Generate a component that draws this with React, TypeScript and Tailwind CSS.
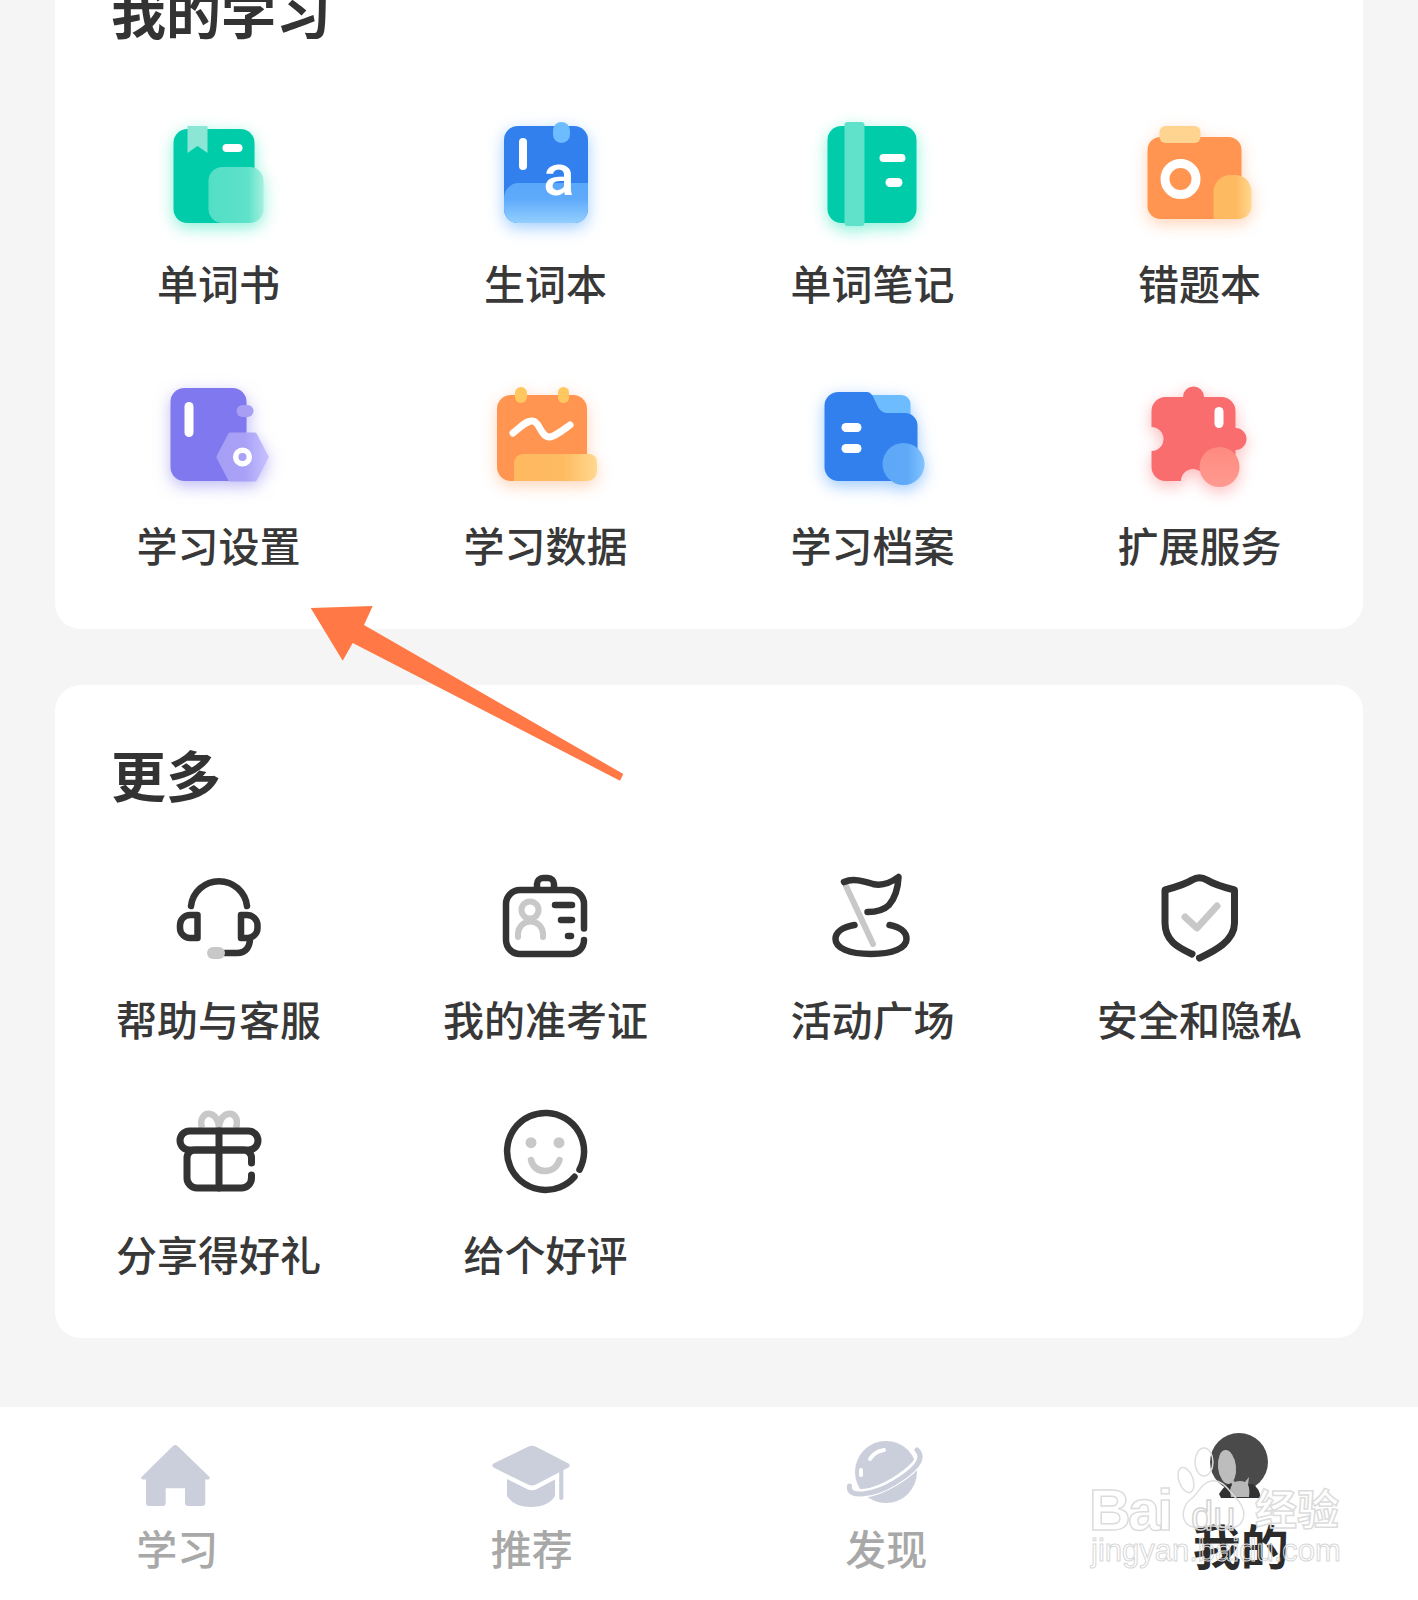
import type { ReactNode } from "react"

const INK = "#333333"
const GREY = "#c8c8c8"

function Gradients() {
  return (
    <svg width="0" height="0" className="absolute">
      <defs>
        <linearGradient id="mint" x1="0" y1="0" x2="1" y2="0">
          <stop offset="0" stopColor="#52dfc6" />
          <stop offset="0.72" stopColor="#5fe1ca" />
          <stop offset="1" stopColor="#a5f0dd" />
        </linearGradient>
        <linearGradient id="sky" x1="0" y1="0" x2="0" y2="1">
          <stop offset="0" stopColor="#5aa8fb" />
          <stop offset="0.4" stopColor="#5eaafb" />
          <stop offset="1" stopColor="#93cffe" />
        </linearGradient>
        <linearGradient id="amber" x1="0" y1="0" x2="1" y2="0">
          <stop offset="0" stopColor="#ffba60" />
          <stop offset="0.6" stopColor="#ffbb62" />
          <stop offset="1" stopColor="#ffd890" />
        </linearGradient>
        <linearGradient id="lilac" x1="0" y1="0" x2="1" y2="0">
          <stop offset="0" stopColor="#a79ff5" />
          <stop offset="0.55" stopColor="#a9a1f6" />
          <stop offset="1" stopColor="#c4beff" />
        </linearGradient>
        <linearGradient id="ball" x1="0" y1="0" x2="1" y2="0">
          <stop offset="0" stopColor="#5ea8f8" />
          <stop offset="0.6" stopColor="#60a9f9" />
          <stop offset="1" stopColor="#82c4ff" />
        </linearGradient>
        <linearGradient id="coral" x1="0" y1="0" x2="0" y2="1">
          <stop offset="0" stopColor="#fe8a80" />
          <stop offset="1" stopColor="#ff9a90" />
        </linearGradient>
      </defs>
    </svg>
  )
}

function Box({ children, shadow = "", dx = 0 }: { children: ReactNode; shadow?: string; dx?: number }) {
  return (
    <svg width="120" height="120" viewBox={`${dx} 0 120 120`} fill="none" className={shadow}>
      {children}
    </svg>
  )
}

const WordBook = () => (
  <Box dx={1} shadow="drop-shadow-[0_5px_8px_rgba(0,224,170,0.45)]">
    <rect x="15.5" y="15" width="81" height="94" rx="14" fill="#00ccaa" />
    <path d="M29.5 12H49.5V39L39.5 32L29.5 39Z" fill="#8be6d5" />
    <rect x="64.5" y="30" width="20" height="8" rx="4" fill="#fff" />
    <rect x="50.5" y="53" width="55" height="56" rx="14" fill="url(#mint)" />
  </Box>
)

const NewWords = () => (
  <Box dx={2} shadow="drop-shadow-[0_5px_8px_rgba(70,160,255,0.5)]">
    <rect x="20" y="12" width="84" height="97" rx="14" fill="#3280ee" />
    <path d="M20 84A15 15 0 0 1 35 69H104V95A14 14 0 0 1 90 109H34A14 14 0 0 1 20 95Z" fill="url(#sky)" />
    <rect x="69" y="8" width="17" height="21" rx="8.5" fill="#6cbcff" />
    <rect x="35" y="24" width="8" height="32" rx="4" fill="#fff" />
    <text x="75" y="81" textAnchor="middle" fill="#fff" fontSize="58" fontWeight="500" className="font-['Roboto',sans-serif]">
      a
    </text>
  </Box>
)

const WordNotes = () => (
  <Box dx={2} shadow="drop-shadow-[0_5px_8px_rgba(0,224,170,0.45)]">
    <rect x="16.5" y="12" width="89" height="97" rx="14" fill="#00ccaa" />
    <rect x="33.5" y="8" width="20" height="104" rx="3" fill="#5fe1ca" />
    <rect x="68.5" y="40" width="26" height="8" rx="4" fill="#fff" />
    <rect x="74.5" y="64" width="17" height="9" rx="4.5" fill="#fff" />
  </Box>
)

const Mistakes = () => (
  <Box dx={3} shadow="drop-shadow-[0_5px_8px_rgba(255,150,80,0.4)]">
    <rect x="10.5" y="23" width="94" height="82" rx="13" fill="#ff9550" />
    <rect x="22.5" y="12" width="41" height="17" rx="6" fill="#ffd390" />
    <circle cx="43.5" cy="65" r="15.5" stroke="#fff" strokeWidth="9" />
    <path d="M76.5 105V78A17 17 0 0 1 93.5 61H98A16.500 16.500 0 0 1 114.500 77.500V92A13 13 0 0 1 101.500 105Z" fill="url(#amber)" />
  </Box>
)

const Settings = () => (
  <Box shadow="drop-shadow-[0_5px_8px_rgba(128,120,238,0.5)]">
    <rect x="11.5" y="12" width="76" height="93" rx="14" fill="#8078ee" />
    <rect x="25.500" y="26" width="9" height="35" rx="4.500" fill="#fff" />
    <rect x="77.500" y="29" width="17" height="12" rx="6" fill="#a89ff5" />
    <path d="M60 81L71.500 59H95.500L107 81L95.500 103H71.500Z" fill="url(#lilac)" stroke="url(#lilac)" strokeWidth="5" strokeLinejoin="round" />
    <circle cx="83.500" cy="81" r="6.800" stroke="#fff" strokeWidth="5.500" />
  </Box>
)

const Data = () => (
  <Box shadow="drop-shadow-[0_5px_8px_rgba(255,150,80,0.4)]">
    <rect x="11" y="19" width="90" height="86" rx="14" fill="#ff9550" />
    <rect x="29" y="11" width="12" height="16" rx="6" fill="#ffc75f" />
    <rect x="72" y="11" width="11" height="16" rx="5.500" fill="#ffc75f" />
    <path d="M27 57C36 50 41 44 47 45C54 46 55 62 64 61C70 60 77 54 84 49" stroke="#fff" strokeWidth="7" strokeLinecap="round" />
    <path d="M28 105V87A9 9 0 0 1 37 78H103A8 8 0 0 1 111 86V95A10 10 0 0 1 101 105Z" fill="url(#amber)" />
  </Box>
)

const Archive = () => (
  <Box shadow="drop-shadow-[0_5px_8px_rgba(60,150,255,0.5)]">
    <rect x="50" y="19" width="47.500" height="40" rx="9" fill="#6cbcff" />
    <path d="M25.500 16H54C63 16 62 37 74 37H92A12.500 12.500 0 0 1 104.500 49.500V91A14 14 0 0 1 90.500 105H25.500A14 14 0 0 1 11.500 91V30A14 14 0 0 1 25.500 16Z" fill="#3280ee" />
    <rect x="28.500" y="47" width="20" height="9" rx="4.500" fill="#fff" />
    <rect x="28.500" y="68" width="20" height="9" rx="4.500" fill="#fff" />
    <circle cx="90.500" cy="88" r="21" fill="url(#ball)" />
  </Box>
)

const Extras = () => (
  <Box dx={1} shadow="drop-shadow-[0_5px_8px_rgba(249,109,111,0.45)]">
    <path
      d="M27 21H44A10.500 10.500 0 0 1 65 21H82A14 14 0 0 1 96.500 35V52A11 11 0 0 1 96.500 74V91A14 14 0 0 1 82.500 105H66A12 12 0 0 0 42 105H27A14 14 0 0 1 12.500 91V75A12 12 0 0 0 12.500 51V35A14 14 0 0 1 27 21Z"
      fill="#f96d6f"
    />
    <rect x="75.500" y="31" width="9" height="21" rx="4.500" fill="#fff" />
    <circle cx="80.500" cy="91" r="20" fill="url(#coral)" />
  </Box>
)

const Headset = () => (
  <Box>
    <g stroke={INK} strokeWidth="6.500" strokeLinecap="round" strokeLinejoin="round">
      <path d="M32 49A28.200 28.200 0 0 1 88 49" />
      <path d="M38.500 58H31A10 10 0 0 0 21 68V71A10 10 0 0 0 31 81H38.500Z" />
      <path d="M82 58H88A10.500 10.500 0 0 1 98.500 68.500V71A10 10 0 0 1 88.500 81H82Z" />
      <path d="M91 81C91 90 87 96 78 96H66" />
    </g>
    <rect x="48" y="90" width="18" height="12" rx="6" fill={GREY} />
  </Box>
)

const Ticket = () => (
  <Box>
    <g stroke={INK} strokeWidth="6.500" strokeLinecap="round" strokeLinejoin="round">
      <path d="M98 71.500V47A14 14 0 0 0 84 33H34A14 14 0 0 0 20 47V83A14 14 0 0 0 34 97H84A14 14 0 0 0 98 83" />
      <path d="M51 32V27A6 6 0 0 1 57 21H62A6 6 0 0 1 68 27V32" />
      <path d="M69 48H86M75 63H86M82 79H85" />
    </g>
    <g stroke={GREY} strokeWidth="6" strokeLinecap="round">
      <circle cx="44" cy="53" r="8.500" />
      <path d="M32 80V77A12.500 12.500 0 0 1 57 77V80" />
    </g>
  </Box>
)

const Flag = () => (
  <Box>
    <path d="M32.500 28L60 87" stroke={GREY} strokeWidth="6" strokeLinecap="round" />
    <g stroke={INK} strokeWidth="6.500" strokeLinecap="round" strokeLinejoin="round">
      <path d="M31 25C40 21 50 24 60 27C68 29 76 27 85.500 20C85 32 82 41 76 48C70 54 63 55 54.500 55" />
      <path d="M41.500 68C30 70 22.500 75 22.500 82C22.500 91 36 97 58 97C80 97 93.500 91 93.500 82C93.500 75 87 70 76.500 68" />
    </g>
  </Box>
)

const Shield = () => (
  <Box>
    <path d="M52 97C40 91 25 85 25 66V33C36 30 46 27 52 23C57 20 62 20 67 23C73 27 83 30 94.500 33V66C94.500 85 72 95 59.500 101" stroke={INK} strokeWidth="7" strokeLinecap="round" strokeLinejoin="round" />
    <path d="M45 60L57 71L77 49" stroke={GREY} strokeWidth="7" strokeLinecap="round" strokeLinejoin="round" />
  </Box>
)

const Gift = () => (
  <Box>
    <path d="M43 36C40 26 46 21 51 22C57 23 60 30 60 36C60 30 63 23 69 22C75 21 80 26 77 36" stroke={GREY} strokeWidth="6.500" />
    <g stroke={INK} strokeWidth="7" strokeLinecap="round" strokeLinejoin="round">
      <rect x="21" y="39" width="78" height="19" rx="9.500" />
      <path d="M60 39V96" />
      <path d="M92.500 71V66A8 8 0 0 0 84 58H36A8 8 0 0 0 28 66V86A10 10 0 0 0 38 96H82A10 10 0 0 0 92.500 86V83" />
    </g>
  </Box>
)

const Smile = () => (
  <Box>
    <path d="M93.500 77.600A38.500 38.500 0 1 0 88.500 84.800" stroke={INK} strokeWidth="6.500" strokeLinecap="round" />
    <circle cx="45" cy="50.700" r="5.500" fill={GREY} />
    <circle cx="73" cy="50.700" r="5.500" fill={GREY} />
    <path d="M45 68C47 75 52 79 59 79C66 79 71 75 73.500 68" stroke={GREY} strokeWidth="6.500" strokeLinecap="round" />
  </Box>
)

const TAB_GREY = "#cbcfdb"

const HouseTab = () => (
  <svg width="80" height="80" viewBox="0 0 80 80">
    <path
      d="M36 10Q38.300 8 40.600 10L72.500 41Q73.500 43 71 43.500H68.300V67Q68.300 70 65 70H51Q48 70 48 67V52.300H28.700V67Q28.700 70 26 70H12Q9 70 9 67V43.500H6Q3.500 43 4.500 41Z"
      fill={TAB_GREY}
    />
  </svg>
)

const HatTab = () => (
  <svg width="80" height="80" viewBox="0 0 80 80">
    <path d="M36.500 10.500Q40 9 43.500 10.500L76.500 27.500Q79 29.700 76.500 31.500L44 48.500Q40 50.500 36 48.500L1.500 31.500Q-1 29.700 1.500 27.500Z" fill={TAB_GREY} />
    <path d="M15 43L35 53Q40 55.500 45 53L63 43.500V60Q56 71 39 71Q22 71 15 60Z" fill={TAB_GREY} />
    <rect x="67.200" y="33" width="4.200" height="31" rx="2.100" fill={TAB_GREY} />
  </svg>
)

const PlanetTab = () => (
  <svg width="80" height="80" viewBox="0 0 80 80" fill="none">
    <circle cx="40" cy="36" r="31" fill={TAB_GREY} />
    <path d="M24 23C27 18 32 15 38 14" stroke="#fff" strokeWidth="4" strokeLinecap="round" />
    <path d="M15 39V34" stroke="#fff" strokeWidth="4" strokeLinecap="round" />
    <path d="M5 52C5 62 28 58 48 46C66 35 78 24 72 15" stroke="#fff" strokeWidth="9" strokeLinecap="round" />
    <path d="M3.500 50C1 63 28 59 48 47C68 35 80 23 71 14" stroke={TAB_GREY} strokeWidth="5" strokeLinecap="round" />
  </svg>
)

const AvatarTab = () => (
  <svg width="80" height="80" viewBox="0 0 80 80" className="overflow-visible">
    <circle cx="38" cy="26" r="29" fill="#4a4a4a" />
    <path d="M18 58Q23 50 28 48H52Q58 52 60 62H20Z" fill="#333333" />
    <ellipse cx="26" cy="31" rx="9" ry="17" fill="#bdbdbd" transform="rotate(-6 26 31)" />
    <path d="M29 41L34 46Q39 44 44 46L48 41L47 49Q49 52 48 61H30Q28 52 31 49Z" fill="#b8b8b8" />
  </svg>
)

const STUDY = [
  { icon: WordBook, label: "单词书" },
  { icon: NewWords, label: "生词本" },
  { icon: WordNotes, label: "单词笔记" },
  { icon: Mistakes, label: "错题本" },
  { icon: Settings, label: "学习设置" },
  { icon: Data, label: "学习数据" },
  { icon: Archive, label: "学习档案" },
  { icon: Extras, label: "扩展服务" },
]

const MORE = [
  { icon: Headset, label: "帮助与客服" },
  { icon: Ticket, label: "我的准考证" },
  { icon: Flag, label: "活动广场" },
  { icon: Shield, label: "安全和隐私" },
  { icon: Gift, label: "分享得好礼" },
  { icon: Smile, label: "给个好评" },
]

const TABS = [
  { icon: HouseTab, label: "学习" },
  { icon: HatTab, label: "推荐" },
  { icon: PlanetTab, label: "发现" },
  { icon: AvatarTab, label: "我的", active: true },
]

function Watermark() {
  return (
    <div className="pointer-events-none absolute left-[1085px] top-[1425px] h-[150px] w-[270px] font-['Liberation_Sans',sans-serif]">
      <svg width="110" height="110" viewBox="0 0 110 110" fill="none" stroke="#dedede" strokeWidth="1.500" className="absolute left-[88px] top-[20px]">
        <ellipse cx="31" cy="17" rx="9" ry="14" />
        <ellipse cx="13" cy="35" rx="7" ry="13" transform="rotate(-20 13 35)" />
        <path d="M38 36C50 34 56 46 62 52C70 60 74 70 68 78C62 86 50 82 40 81C30 80 20 86 13 78C8 72 10 60 18 54C26 48 28 38 38 36Z" />
      </svg>
      <span className="absolute left-[4px] top-[50px] text-[58px] leading-[70px] font-bold tracking-[-3px] text-transparent [-webkit-text-stroke:1.5px_#dcdcdc]">
        Bai
      </span>
      <span className="absolute left-[106px] top-[68px] text-[40px] leading-[46px] text-transparent [-webkit-text-stroke:1.5px_#d4d4d4]">
        du
      </span>
      <span className="absolute left-[170px] top-[52px] text-[42px] leading-[60px] font-bold text-transparent font-['Noto_Sans_CJK_SC',sans-serif] [-webkit-text-stroke:1.5px_#dcdcdc]">
        经验
      </span>
      <span className="absolute left-[6px] top-[108px] text-[31px] leading-[36px] text-transparent [-webkit-text-stroke:1px_#d8d8d8]">
        jingyan.baidu.com
      </span>
    </div>
  )
}

function Arrow() {
  return (
    <svg width="340" height="200" viewBox="0 0 340 200" className="pointer-events-none absolute left-[300px] top-[595px]">
      <path d="M10.700 13L72.700 11L64 30L323.300 179L320 185.700L52.700 48L42.700 65.700Z" fill="#ff7846" />
    </svg>
  )
}

function IconGrid({ items, labelGap, rowGap }: { items: typeof STUDY; labelGap: string; rowGap: string }) {
  return (
    <div className={`grid grid-cols-4 ${rowGap}`}>
      {items.map((item) => {
        const Icon = item.icon
        return (
          <div key={item.label} className="flex flex-col items-center">
            <Icon />
            <span className={`${labelGap} text-[41px] leading-[56px] font-medium text-[#383838]`}>{item.label}</span>
          </div>
        )
      })}
    </div>
  )
}

export default function App() {
  return (
    <div className="relative flex h-[1600px] w-full flex-col overflow-hidden bg-[#f5f5f5] font-['Noto_Sans_CJK_SC',sans-serif]">
      <Gradients />

      <section className="mx-[55px] -mt-[60px] rounded-[26px] bg-white pt-[40px] pb-[57px]">
        <h2 className="pl-[56px] text-[55px] leading-[60px] font-bold text-[#333]">我的学习</h2>
        <div className="mt-[74px]">
          <IconGrid items={STUDY} labelGap="mt-[20px]" rowGap="gap-y-[66px]" />
        </div>
      </section>

      <section className="mx-[55px] mt-[56px] rounded-[26px] bg-white pt-[58px] pb-[57px]">
        <h2 className="pl-[56px] text-[55px] leading-[60px] font-bold text-[#333]">更多</h2>
        <div className="mt-[54px]">
          <IconGrid items={MORE} labelGap="mt-[13px]" rowGap="gap-y-[46px]" />
        </div>
      </section>

      <nav className="mt-auto grid h-[193px] grid-cols-4 bg-white pt-[29px]">
        {TABS.map((tab) => {
          const Icon = tab.icon
          return (
            <div key={tab.label} className="flex flex-col items-center">
              <Icon />
              <span
                className={
                  tab.active
                    ? "mt-[3px] text-[48px] leading-[50px] font-bold text-[#2b2b2b]"
                    : "mt-[6px] text-[41px] leading-[50px] font-medium text-[#a8a8a8]"
                }
              >
                {tab.label}
              </span>
            </div>
          )
        })}
      </nav>

      <Watermark />
      <Arrow />
    </div>
  )
}
